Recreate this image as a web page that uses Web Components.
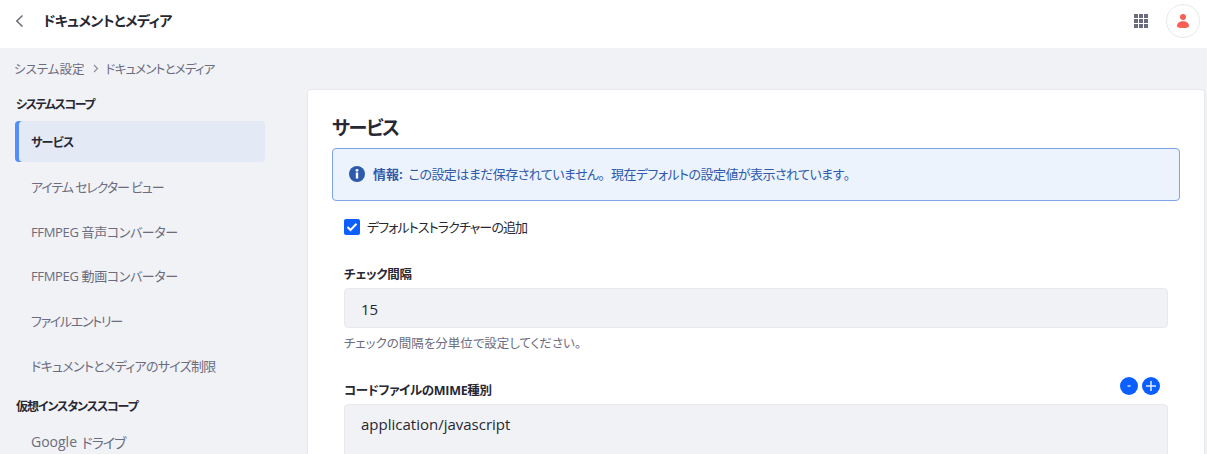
<!DOCTYPE html>
<html lang="ja"><head><meta charset="utf-8"><title>ドキュメントとメディア</title>
<style>
html,body{margin:0;height:454px;overflow:hidden;background:#f1f2f5;font-family:"Open Sans","Noto Sans CJK JP",sans-serif;color:#272833;font-feature-settings:"palt"}
</style></head><body>
<app-header></app-header>
<app-breadcrumb></app-breadcrumb>
<app-layout>
  <side-nav slot="side"></side-nav>
  <service-card slot="main"></service-card>
</app-layout>
<script>
const def=(name,html)=>customElements.define(name,class extends HTMLElement{constructor(){super();this.attachShadow({mode:'open'}).innerHTML=html}});
def('app-header',`<style>
:host{display:flex;align-items:center;height:48px;background:#fff;padding:0 7px 6px 14px;box-sizing:border-box}
svg{display:block}
.back{width:11px;height:14px;margin-right:18px}
h1{margin:0;flex:1;font-size:14px;font-weight:700;color:#272833;line-height:20px;letter-spacing:-.55px}
.grid{margin-right:18px}
.av{width:34px;height:34px;border-radius:50%;border:1px solid #e7e7ed;box-sizing:border-box;background:#fff;display:flex;align-items:center;justify-content:center}
</style>
<svg class="back" viewBox="0 0 11 14"><path d="M8.5 1.5 2.800 7l5.700 5.500" fill="none" stroke="#6b6c7e" stroke-width="1.500"/></svg>
<h1>ドキュメントとメディア</h1>
<svg class="grid" width="14" height="14" viewBox="0 0 14 14" fill="#6b6c7e"><rect width="4" height="4"/><rect x="5" width="4" height="4"/><rect x="10" width="4" height="4"/><rect y="5" width="4" height="4"/><rect x="5" y="5" width="4" height="4"/><rect x="10" y="5" width="4" height="4"/><rect y="10" width="4" height="4"/><rect x="5" y="10" width="4" height="4"/><rect x="10" y="10" width="4" height="4"/></svg>
<div class="av"><svg width="12" height="14" viewBox="0 0 12 14" fill="#f75f52"><circle cx="6" cy="3" r="3"/><path d="M0 12.200C0 9 2.500 7.200 6 7.200s6 1.800 6 5c0 1.200-2.500 1.800-6 1.800s-6-.6-6-1.800Z"/></svg></div>`);
def('app-breadcrumb',`<style>
:host{display:flex;align-items:center;height:42px;padding:0 0 2px 14px;box-sizing:border-box;font-size:12.500px;color:#6b6c7e}
svg{margin:0 7px 0 8px}
.b{letter-spacing:-.8px}
</style><span>システム設定</span><svg width="6" height="9" viewBox="0 0 6 9"><path d="M1 1l3.500 3.500L1 8" fill="none" stroke="#8a8b99" stroke-width="1.100"/></svg><span class="b">ドキュメントとメディア</span>`);
def('app-layout',`<style>
:host{display:flex;padding-left:15px;align-items:flex-start}
.s{width:250px;flex:none;margin-right:42px}
.m{flex:1;min-width:0;margin:-1px 2px 0 0}
</style><div class="s"><slot name="side"></slot></div><div class="m"><slot name="main"></slot></div>`);
def('side-nav',`<style>
:host{display:block;font-size:13px}
h2{margin:0;font-size:12px;font-weight:700;color:#272833;line-height:18px;padding-left:1px}
h2.one{margin-top:6px;margin-bottom:7px;letter-spacing:-1.400px}
h2.two{margin-top:12px;margin-bottom:5.500px;letter-spacing:-1.100px}
a{display:flex;align-items:center;height:41px;margin-bottom:3.800px;padding-left:16px;color:#6b6c7e;border-radius:4px;box-sizing:border-box;white-space:pre}
a.on{background:#e3e9f5;color:#272833;font-weight:700;font-size:12px;letter-spacing:-.7px;box-shadow:inset 4px 0 0 #528eff}
.l1{letter-spacing:-1.100px}.l2{letter-spacing:-.35px}.l3{letter-spacing:-1.300px}.l4{letter-spacing:-.7px}
.g{font-size:14px}.dr{font-size:14px;letter-spacing:-1px;margin-left:1px}
</style>
<h2 class="one">システムスコープ</h2>
<a class="on">サービス</a><a class="l1">アイテム セレクター ビュー</a><a class="l2">FFMPEG 音声コンバーター</a><a class="l2">FFMPEG 動画コンバーター</a><a class="l3">ファイルエントリー</a><a class="l4">ドキュメントとメディアのサイズ制限</a>
<h2 class="two">仮想インスタンススコープ</h2>
<a class="g">Google <span class="dr">ドライブ</span></a>`);
def('service-card',`<style>
:host{display:block;height:400px;background:#fff;border:1px solid #e7e7ed;border-bottom:0;border-radius:4px 4px 0 0;box-sizing:border-box;padding:20px 24px 0 24px}
h3{margin:0 0 1px;font-size:19px;font-weight:700;line-height:37px;color:#272833;letter-spacing:-1.250px}
.alert{display:flex;align-items:center;height:53px;box-sizing:border-box;border:1px solid #7ea3e6;border-radius:4px;background:#edf3fc;color:#2e5aac;font-size:13px;padding:0 0 2px 16px}
.alert svg{margin-right:8px;flex:none}
.alert b{margin-right:6px}
.alert span{letter-spacing:-.55px}
.alert em{font-style:normal;font-feature-settings:normal}
.f{padding:0 12px}
.chk{display:flex;align-items:center;gap:7px;font-size:13px;height:20px;margin:16px 0 29px}
.chk span{letter-spacing:-.9px;padding-bottom:2px}
.chk i{display:flex;width:16px;height:16px;border-radius:2px;background:#0b5fff;align-items:center;justify-content:center}
label{display:block;font-size:12.500px;font-weight:700;line-height:18px;color:#272833;letter-spacing:-.3px}
.input{height:40px;margin-top:4px;background:#f1f2f5;border:1px solid #e7e7ed;border-radius:4px;box-sizing:border-box;padding:2px 0 0 16px;display:flex;align-items:center;font-size:15px;color:#272833}
.help{font-size:12.500px;color:#6b6c7e;line-height:18px;margin:7px 0 29px}
.lrow{display:flex;align-items:flex-start;justify-content:space-between;height:18px}
.btns{display:flex;gap:4px;margin:-5px 8px 0 0}
.btns span{width:18px;height:18px;border-radius:50%;background:#0b5fff;display:flex;align-items:center;justify-content:center}
.ta{height:80px;margin-top:4px;background:#f1f2f5;border:1px solid #e7e7ed;border-radius:4px;box-sizing:border-box;padding:9px 16px;font-size:15px;color:#272833;line-height:20px}
</style>
<h3>サービス</h3>
<div class="alert"><svg width="16" height="16" viewBox="0 0 16 16"><circle cx="8" cy="8" r="8" fill="#2e5aac"/><rect x="6.800" y="6.500" width="2.400" height="6" fill="#fff"/><circle cx="8" cy="4.300" r="1.400" fill="#fff"/></svg><b>情報:</b><span>この設定はまだ保存されていません<em>。</em>現在デフォルトの設定値が表示されています<em>。</em></span></div>
<div class="f">
<div class="chk"><i><svg width="12" height="10" viewBox="0 0 12 10"><path d="M1.500 5 4.500 8 10.500 1.800" fill="none" stroke="#fff" stroke-width="2"/></svg></i><span>デフォルトストラクチャーの追加</span></div>
<label>チェック間隔</label>
<div class="input">15</div>
<div class="help">チェックの間隔を分単位で設定してください。</div>
<div class="lrow"><label>コードファイルのMIME種別</label><div class="btns"><span><svg width="8" height="8" viewBox="0 0 8 8"><path d="M2.500 4h3" stroke="#cfe0ff" stroke-width="1.500"/></svg></span><span><svg width="10" height="10" viewBox="0 0 10 10"><path d="M5 0v10M0 5h10" stroke="#e2ecff" stroke-width="1.500"/></svg></span></div></div>
<div class="ta">application/javascript</div>
</div>`);
</script>
</body></html>
